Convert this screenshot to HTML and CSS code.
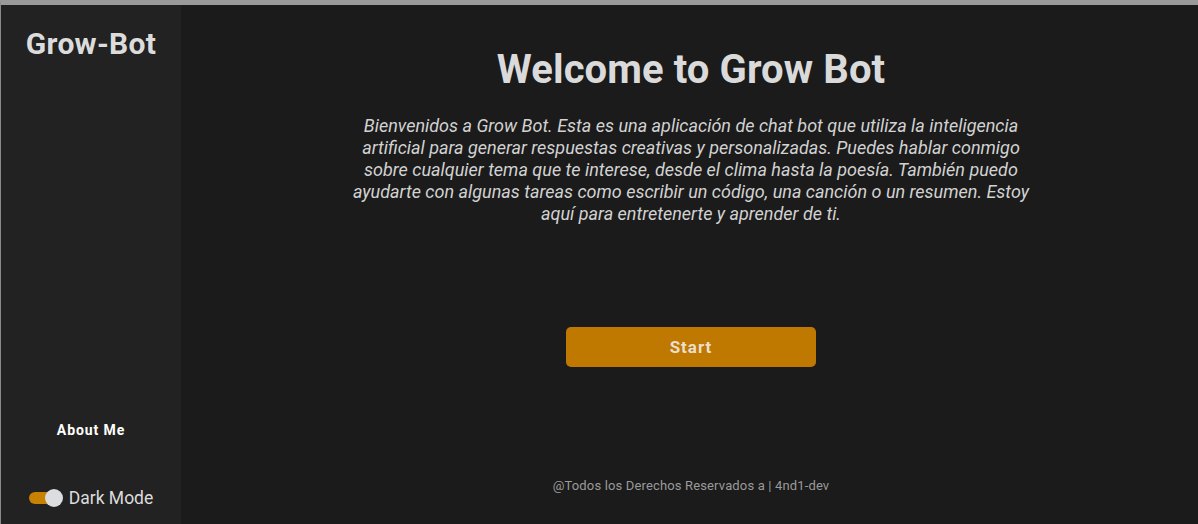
FILE: index.html
```html
<!DOCTYPE html>
<html lang="es">
<head>
<meta charset="utf-8">
<title>Grow-Bot</title>
<link rel="stylesheet" href="styles.css">
</head>
<body>
<div class="app">
  <aside class="sidebar">
    <h2 class="brand">Grow-Bot</h2>
    <div class="side-bottom">
      <a class="about" href="#">About Me</a>
      <label class="mode">
        <span class="toggle"><span class="knob"></span></span>
        <span class="mode-label">Dark Mode</span>
      </label>
    </div>
  </aside>
  <main class="main">
    <h1 class="title">Welcome to Grow Bot</h1>
    <p class="intro">Bienvenidos a Grow Bot. Esta es una aplicación de chat bot que utiliza la inteligencia artificial para generar respuestas creativas y personalizadas. Puedes hablar conmigo sobre cualquier tema que te interese, desde el clima hasta la poesía. También puedo ayudarte con algunas tareas como escribir un código, una canción o un resumen. Estoy aquí para entretenerte y aprender de ti.</p>
    <button class="start">Start</button>
    <footer class="footer">@Todos los Derechos Reservados a | 4nd1-dev</footer>
  </main>
</div>
</body>
</html>
```
FILE: styles.css
```css
* { box-sizing: border-box; }
html, body { margin: 0; height: 100%; }
body {
  background: #1b1b1b;
  font-family: Roboto, "Liberation Sans", sans-serif;
  border-top: 5px solid #9a9a9a;
  border-left: 1px solid #8a8a8a;
}
.app {
  display: flex;
  height: 100%;
}
.sidebar {
  width: 180px;
  flex: none;
  background: #222222;
  display: flex;
  flex-direction: column;
  align-items: center;
  justify-content: space-between;
  padding: 21px 0 16px;
}
.brand {
  margin: 0;
  font-size: 30px;
  font-weight: 700;
  color: #dcdcdc;
  letter-spacing: 0.3px;
}
.side-bottom {
  display: flex;
  flex-direction: column;
  align-items: center;
  gap: 50px;
}
.about {
  color: #ffffff;
  font-weight: 700;
  font-size: 14px;
  text-decoration: none;
  letter-spacing: 0.9px;
}
.mode {
  display: flex;
  align-items: center;
  gap: 6px;
}
.toggle {
  position: relative;
  width: 34px;
  height: 18px;
  display: block;
}
.toggle::before {
  content: "";
  position: absolute;
  left: 0; top: 3px;
  width: 30px; height: 12px;
  border-radius: 6px;
  background: #c68200;
}
.knob {
  position: absolute;
  right: 0; top: 0;
  width: 18px; height: 18px;
  border-radius: 50%;
  background: #dcdde0;
}
.mode-label {
  color: #dcdcdc;
  font-size: 17.5px;
}
.main {
  flex: 1;
  display: flex;
  flex-direction: column;
  align-items: center;
  padding: 39px 0 0 3px;
}
.title {
  margin: 0;
  font-size: 40px;
  font-weight: 700;
  color: #dadada;
  line-height: 52px;
  letter-spacing: 0.1px;
}
.intro {
  margin: 19px 0 0;
  width: 700px;
  text-align: center;
  font-style: italic;
  font-size: 18px;
  line-height: 22px;
  color: #d2d2d2;
}
.start {
  margin-top: 102px;
  width: 250px;
  height: 40px;
  border: none;
  border-radius: 5px;
  background: #bf7800;
  color: #ecdfcc;
  font-family: Roboto, "Liberation Sans", sans-serif;
  font-weight: 700;
  font-size: 17px;
  letter-spacing: 1px;
}
.footer {
  margin-top: 111px;
  color: #9a9a9a;
  font-size: 13px;
  letter-spacing: 0.15px;
}
```
